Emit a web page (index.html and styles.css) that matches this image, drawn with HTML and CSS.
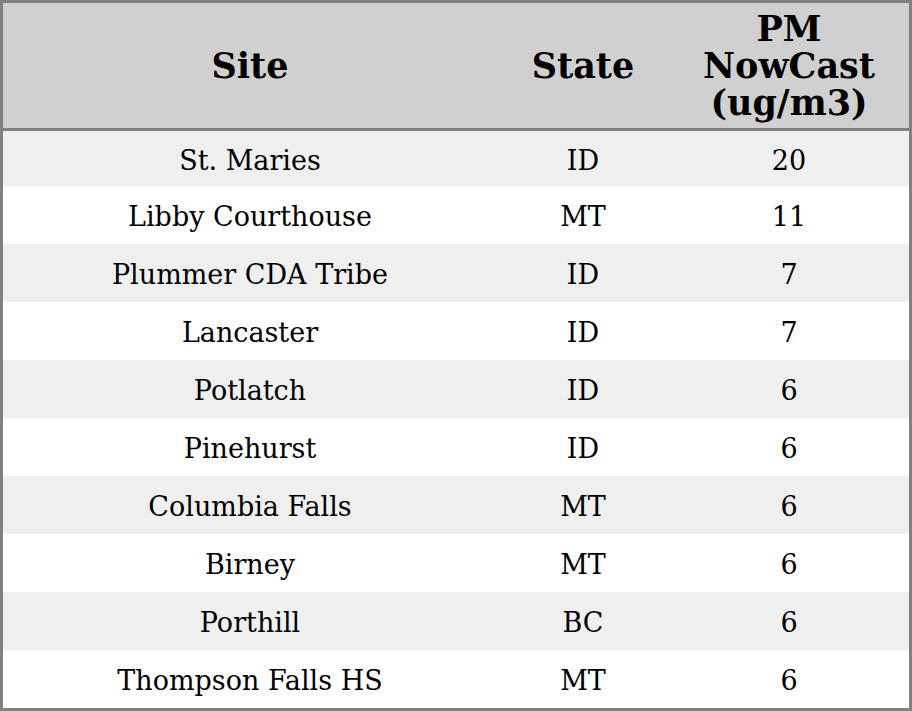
FILE: index.html
```html
<!DOCTYPE html>
<html>
<head>
<meta charset="utf-8">
<link rel="stylesheet" href="styles.css">
</head>
<body>
<table class="aq">
<colgroup><col class="c-site"><col class="c-state"><col class="c-pm"></colgroup>
<thead>
<tr><th>Site</th><th>State</th><th>PM<br>NowCast<br>(ug/m3)</th></tr>
</thead>
<tbody>
<tr><td>St. Maries</td><td>ID</td><td>20</td></tr>
<tr><td>Libby Courthouse</td><td>MT</td><td>11</td></tr>
<tr><td>Plummer CDA Tribe</td><td>ID</td><td>7</td></tr>
<tr><td>Lancaster</td><td>ID</td><td>7</td></tr>
<tr><td>Potlatch</td><td>ID</td><td>6</td></tr>
<tr><td>Pinehurst</td><td>ID</td><td>6</td></tr>
<tr><td>Columbia Falls</td><td>MT</td><td>6</td></tr>
<tr><td>Birney</td><td>MT</td><td>6</td></tr>
<tr><td>Porthill</td><td>BC</td><td>6</td></tr>
<tr><td>Thompson Falls HS</td><td>MT</td><td>6</td></tr>
</tbody>
</table>
</body>
</html>
```
FILE: styles.css
```css
html, body { margin: 0; padding: 0; background: #fff; }
.aq {
  width: 912px;
  height: 711px;
  border-collapse: separate;
  border-spacing: 0;
  border: 3px solid #808080;
  box-sizing: border-box;
  table-layout: fixed;
  font-family: "DejaVu Serif", serif;
  color: #000;
}
.c-site { width: 494px; }
.c-state { width: 172px; }
.c-pm { width: 240px; }
.aq th {
  background: #d0d0d0;
  font-size: 35px;
  line-height: 37px;
  font-weight: bold;
  height: 125px;
  padding: 0;
  border-bottom: 3px solid #808080;
  text-align: center;
  vertical-align: middle;
}
.aq td {
  font-size: 27px;
  line-height: 32px;
  text-align: center;
  vertical-align: middle;
  padding: 4px 0 0;
  height: 54px;
}
.aq tbody tr:first-child td { height: 51px; }
.aq tbody tr:nth-child(odd) td { background: #efefef; }
.aq tbody tr:nth-child(even) td { background: #fff; }
```
